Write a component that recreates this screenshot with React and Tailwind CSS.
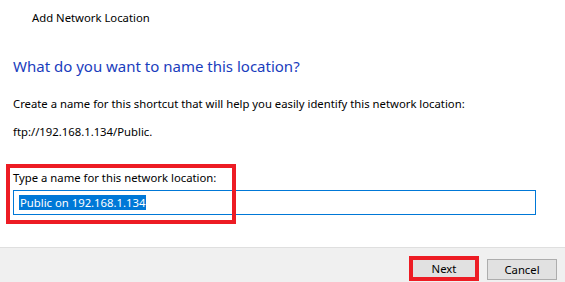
import React from "react";

const App = () => {
  return (
    <div className="w-[565px] h-[282px] bg-white flex flex-col overflow-hidden text-[11.3px] text-black font-['Noto_Sans','Open_Sans',sans-serif]">
      {/* Title bar */}
      <div className="pl-[32px] pt-[10px] h-[26px] leading-[16px]">Add Network Location</div>

      {/* Body */}
      <div className="flex-1 flex flex-col pl-[13px] pr-[29px]">
        <h1 className="mt-[29px] text-[15px] leading-[22px] text-[#1a3dbd]">
          What do you want to name this location?
        </h1>
        <p className="mt-[19px] leading-[16px]">
          Create a name for this shortcut that will help you easily identify this network location:
        </p>
        <p className="mt-[12px] leading-[16px]">ftp://192.168.1.134/Public.</p>

        <div className="relative mt-[30px]">
          <label className="block leading-[16px]">Type a name for this network location:</label>
          <div className="mt-[4px] h-[25px] border border-[#0078d7] flex items-center pl-[5px]">
            <span className="bg-[#0078d7] text-white leading-[15px] px-[1px]">Public on 192.168.1.134</span>
          </div>
          <div className="absolute left-[-7px] top-[-6px] w-[230px] h-[60px] border-[4px] border-[#ed1c24] pointer-events-none" />
        </div>
      </div>

      {/* Footer */}
      <div className="h-[35px] bg-[#f0f0f0] border-t border-[#dfdfdf] flex items-start justify-end pt-[10px] pr-[8px] gap-[11px]">
        <div className="relative">
          <button className="w-[64px] h-[21px] bg-[#e1e1e1] border border-[#adadad] leading-[18px]">Next</button>
          <div className="absolute left-[-3px] top-[-2px] w-[70px] h-[25px] border-[4px] border-[#ed1c24] pointer-events-none" />
        </div>
        <button className="w-[70px] h-[21px] mt-[1px] bg-[#e1e1e1] border border-[#adadad] leading-[18px]">Cancel</button>
      </div>
    </div>
  );
};

export default App;
